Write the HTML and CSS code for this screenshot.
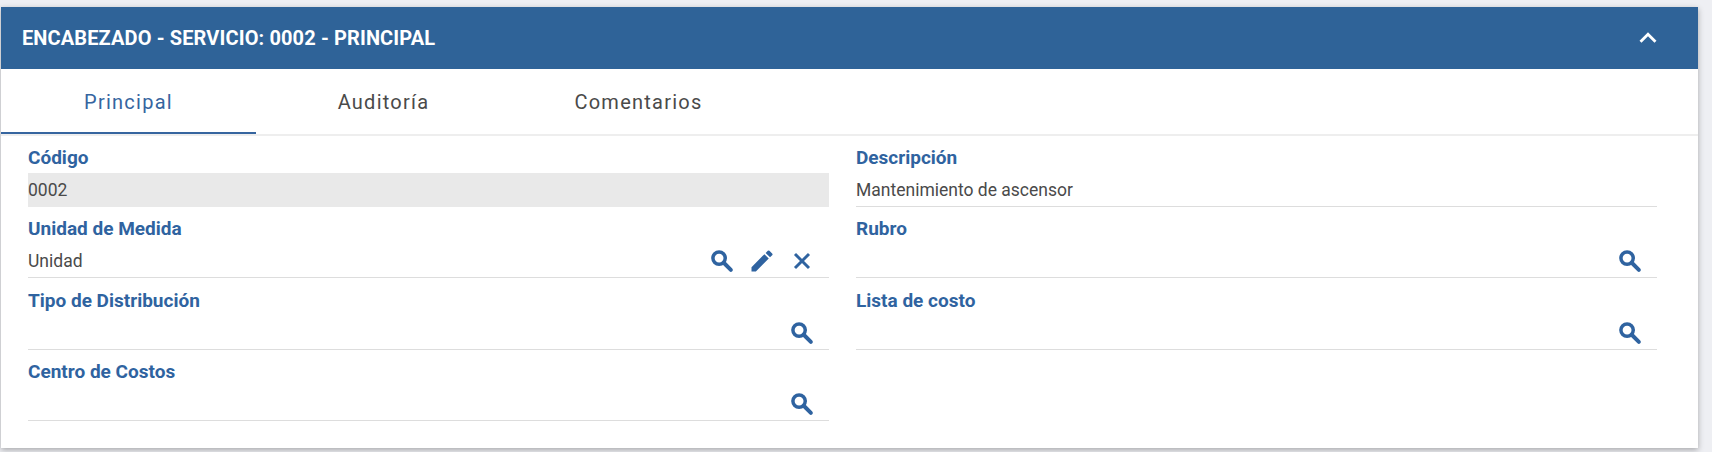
FILE: index.html
```html
<!DOCTYPE html>
<html lang="es">
<head>
  <meta charset="UTF-8">
  <meta name="viewport" content="width=device-width, initial-scale=1.0">
  <title>Encabezado - Servicio</title>
  <link rel="stylesheet" href="styles.css">
</head>
<body>
  <section class="panel">
    <header class="panel-header">
      <h1>ENCABEZADO - SERVICIO: 0002 - PRINCIPAL</h1>
      <svg class="chevron" viewBox="0 0 24 24"><path d="M7.41 15.41 12 10.83l4.59 4.58L18 14l-6-6-6 6z"/></svg>
    </header>
    <nav class="tabs">
      <div class="tab activa">Principal</div>
      <div class="tab">Auditoría</div>
      <div class="tab">Comentarios</div>
    </nav>
    <div class="campos">
      <div class="campo">
        <label>Código</label>
        <div class="valor deshabilitado">0002</div>
      </div>
      <div class="campo">
        <label>Descripción</label>
        <div class="valor">Mantenimiento de ascensor</div>
      </div>
      <div class="campo">
        <label>Unidad de Medida</label>
        <div class="valor">
          <span>Unidad</span>
          <div class="iconos">
            <svg class="icono" viewBox="0 0 24 24"><circle class="lupa" cx="9.5" cy="9.5" r="5.3"/><path class="mango" d="M13.5 13.5 19.6 19.6"/></svg>
            <svg class="icono" viewBox="0 0 24 24"><path d="M3 17.25V21h3.75L17.81 9.94l-3.75-3.75L3 17.25zM20.71 7.04a1 1 0 0 0 0-1.41l-2.34-2.34a1 1 0 0 0-1.41 0l-1.83 1.83 3.75 3.75 1.83-1.83z"/></svg>
            <svg class="icono" viewBox="0 0 24 24"><path class="cruz" d="M6 6 18 18M18 6 6 18"/></svg>
          </div>
        </div>
      </div>
      <div class="campo">
        <label>Rubro</label>
        <div class="valor">
          <span></span>
          <div class="iconos">
            <svg class="icono" viewBox="0 0 24 24"><circle class="lupa" cx="9.5" cy="9.5" r="5.3"/><path class="mango" d="M13.5 13.5 19.6 19.6"/></svg>
          </div>
        </div>
      </div>
      <div class="campo">
        <label>Tipo de Distribución</label>
        <div class="valor">
          <span></span>
          <div class="iconos">
            <svg class="icono" viewBox="0 0 24 24"><circle class="lupa" cx="9.5" cy="9.5" r="5.3"/><path class="mango" d="M13.5 13.5 19.6 19.6"/></svg>
          </div>
        </div>
      </div>
      <div class="campo">
        <label>Lista de costo</label>
        <div class="valor">
          <span></span>
          <div class="iconos">
            <svg class="icono" viewBox="0 0 24 24"><circle class="lupa" cx="9.5" cy="9.5" r="5.3"/><path class="mango" d="M13.5 13.5 19.6 19.6"/></svg>
          </div>
        </div>
      </div>
      <div class="campo">
        <label>Centro de Costos</label>
        <div class="valor">
          <span></span>
          <div class="iconos">
            <svg class="icono" viewBox="0 0 24 24"><circle class="lupa" cx="9.5" cy="9.5" r="5.3"/><path class="mango" d="M13.5 13.5 19.6 19.6"/></svg>
          </div>
        </div>
      </div>
    </div>
  </section>
</body>
</html>
```

FILE: styles.css
```css
html, body {
  height: 100%;
}
body {
  font-family: Roboto, Arial, sans-serif;
  background-color: #eeeff3;
  margin: 0;
  padding: 7px 14px 4px 1px;
  box-sizing: border-box;
  overflow: hidden;
}
.panel {
  background-color: #fff;
  height: 441px;
  box-shadow: 0 2px 6px rgba(0, 0, 0, 0.3);
}
.panel-header {
  background-color: #2f6398;
  color: #fff;
  height: 62px;
  display: flex;
  align-items: center;
  justify-content: space-between;
  padding: 0 33px 0 21px;
}
.panel-header h1 {
  margin: 0;
  font-size: 20px;
  font-weight: 700;
  letter-spacing: 0.12px;
  line-height: 1;
}
.chevron {
  width: 34px;
  height: 34px;
  fill: #fff;
}
.tabs {
  display: flex;
  height: 67px;
  box-sizing: border-box;
  border-bottom: 2px solid #eee;
}
.tab {
  width: 255px;
  height: 65px;
  box-sizing: border-box;
  display: flex;
  align-items: center;
  justify-content: center;
  font-size: 20px;
  letter-spacing: 1.25px;
  color: #4a4a4a;
}
.tab.activa {
  color: #36659f;
  padding-top: 2px;
  border-bottom: 2px solid #36659f;
}
.campos {
  display: grid;
  grid-template-columns: 801px 801px;
  column-gap: 27px;
  padding: 11px 0 0 27px;
}
.campo {
  height: 71.3px;
}
.campo label {
  display: block;
  height: 26px;
  line-height: 22px;
  font-size: 19px;
  font-weight: 700;
  color: #2f63a0;
}
.valor {
  height: 34px;
  padding-top: 1px;
  box-sizing: border-box;
  display: flex;
  align-items: center;
  justify-content: space-between;
  font-size: 17.5px;
  color: #4a4a4a;
  border-bottom: 1px solid #ddd;
}
.valor.deshabilitado {
  background-color: #e9e9e9;
  border-bottom-color: #e9e9e9;
}
.iconos {
  display: flex;
  gap: 12px;
  padding-right: 13px;
}
.icono {
  width: 28px;
  height: 28px;
  fill: #2f63a0;
}
.lupa {
  fill: none;
  stroke: #2f63a0;
  stroke-width: 3;
}
.mango {
  fill: none;
  stroke: #2f63a0;
  stroke-width: 3.4;
  stroke-linecap: round;
}
.cruz {
  fill: none;
  stroke: #2f63a0;
  stroke-width: 2.5;
}
```
